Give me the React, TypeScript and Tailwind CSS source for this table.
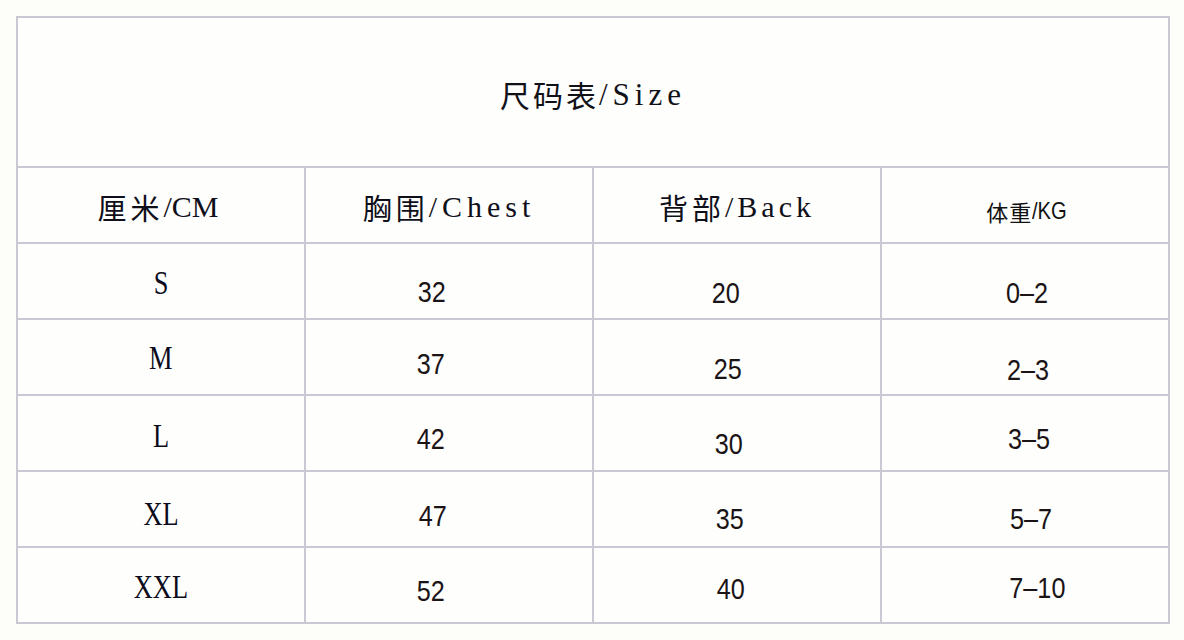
import React from "react";

const serif = "font-['Liberation_Serif','Noto_Sans_CJK_SC',serif]";
const cjk = "font-['Noto_Sans_CJK_SC',sans-serif]";
const sans = "font-['Liberation_Sans',sans-serif]";

type Row = {
  size: string;
  sizeCls: string;
  c2: string;
  c2Cls: string;
  c3: string;
  c3Cls: string;
  c4: string;
  c4Cls: string;
};

const rows: Row[] = [
  { size: "S", sizeCls: "pt-[5px]", c2: "32", c2Cls: "pt-[22px] pr-[34px]", c3: "20", c3Cls: "pt-[24px] pr-[22px]", c4: "0–2", c4Cls: "pt-[24px] pl-[5px]" },
  { size: "M", sizeCls: "pt-[3px]", c2: "37", c2Cls: "pt-[14px] pr-[36px]", c3: "25", c3Cls: "pt-[24px] pr-[19px]", c4: "2–3", c4Cls: "pt-[26px] pl-[7px]" },
  { size: "L", sizeCls: "pt-[6px]", c2: "42", c2Cls: "pt-[12px] pr-[36px]", c3: "30", c3Cls: "pt-[21px] pr-[16px]", c4: "3–5", c4Cls: "pt-[12px] pl-[9px]" },
  { size: "XL", sizeCls: "pt-[10px]", c2: "47", c2Cls: "pt-[13px] pr-[32px]", c3: "35", c3Cls: "pt-[19px] pr-[14px]", c4: "5–7", c4Cls: "pt-[19px] pl-[12px]" },
  { size: "XXL", sizeCls: "pt-[5px]", c2: "52", c2Cls: "pt-[11px] pr-[36px]", c3: "40", c3Cls: "pt-[7px] pr-[12px]", c4: "7–10", c4Cls: "pt-[6px] pl-[24px]" },
];

const cell = "flex items-center justify-center border-r-2 border-b-2 border-[#c8c9d3]";
const num = `${sans} inline-block scale-x-[0.84] text-[30px] leading-none text-[#1b1416]`;

export default function App() {
  return (
    <div className="w-[1184px] h-[640px] bg-[#fdfdf9] pt-[16px] pl-[16px]">
      <div className="grid w-[1154px] grid-cols-4 border-t-2 border-l-2 border-[#c8c9d3] bg-[#fefefc]">
        <div className={`${cell} col-span-4 h-[150px] pt-[4px]`}>
          <div className="leading-none text-[#111118] whitespace-nowrap flex items-center">
            <span className={`${cjk} text-[30px] tracking-[3px]`}>尺码表</span>
            <span className={`${serif} text-[31px] tracking-[5px]`}>/Size</span>
          </div>
        </div>

        <div className={`${cell} h-[76px] pt-[4px] pr-[6px]`}>
          <div className="leading-none text-[#0f0f1a] whitespace-nowrap flex items-center">
            <span className={`${cjk} text-[29px] tracking-[4px]`}>厘米</span>
            <span className={`${serif} text-[30px]`}>/CM</span>
          </div>
        </div>
        <div className={`${cell} h-[76px] pt-[4px]`}>
          <div className="leading-none text-[#0f0f1a] whitespace-nowrap flex items-center">
            <span className={`${cjk} text-[29px] tracking-[4px]`}>胸围</span>
            <span className={`${serif} text-[30px] tracking-[5px]`}>/Chest</span>
          </div>
        </div>
        <div className={`${cell} h-[76px] pt-[4px]`}>
          <div className="leading-none text-[#0f0f1a] whitespace-nowrap flex items-center">
            <span className={`${cjk} text-[29px] tracking-[4px]`}>背部</span>
            <span className={`${serif} text-[30px] tracking-[4px]`}>/Back</span>
          </div>
        </div>
        <div className={`${cell} h-[76px] pt-[11px] pl-[10px]`}>
          <div className="leading-none text-[#111111] whitespace-nowrap flex items-center">
            <span className={`${cjk} text-[22px] tracking-[1px]`}>体重</span>
            <span className={`${sans} inline-block scale-x-[0.84] origin-left text-[24px]`}>/KG</span>
          </div>
        </div>

        {rows.map((r) => (
          <React.Fragment key={r.size}>
            <div className={`${cell} h-[76px] ${r.sizeCls}`}>
              <span className={`${serif} inline-block scale-x-80 text-[33px] leading-none text-[#0c0c1c]`}>{r.size}</span>
            </div>
            <div className={`${cell} h-[76px] ${r.c2Cls}`}>
              <span className={num}>{r.c2}</span>
            </div>
            <div className={`${cell} h-[76px] ${r.c3Cls}`}>
              <span className={num}>{r.c3}</span>
            </div>
            <div className={`${cell} h-[76px] ${r.c4Cls}`}>
              <span className={num}>{r.c4}</span>
            </div>
          </React.Fragment>
        ))}
      </div>
    </div>
  );
}
